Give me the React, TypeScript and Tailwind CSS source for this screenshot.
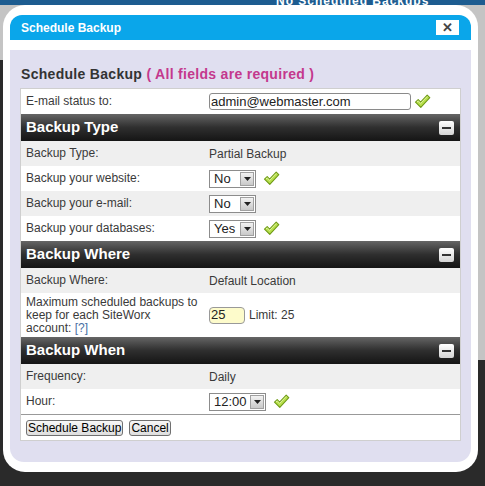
import React from "react";

const FONT = { fontFamily: '"Liberation Sans", Arial, sans-serif' };

function Check() {
  return (
    <svg width="17" height="15" viewBox="0 0 17 15" className="shrink-0">
      <path
        d="M1.5 8.2 L4.2 5.6 L6.6 8.2 L13.2 1.2 L15.8 3.6 L6.8 13.4 Z"
        fill="#b8e04c"
        stroke="#6f9a18"
        strokeWidth="1.1"
        strokeLinejoin="round"
      />
      <path d="M3 8 L4.2 6.8 L6.6 9.4 L13.3 2.4" fill="none" stroke="#e4f7a6" strokeWidth="0.9" />
    </svg>
  );
}

function Select({ value, width }: { value: string; width: string }) {
  return (
    <div className={`flex h-[18px] items-center border border-[#8c8c8c] bg-white ${width}`}>
      <span className="flex-1 pl-[4px] text-[13px] leading-none text-[#222]">{value}</span>
      <span className="mr-[1px] flex h-[14px] w-[14px] items-center justify-center border border-[#a0a0a0] bg-gradient-to-b from-[#f2f2f2] to-[#c9c9c9]">
        <svg width="7" height="4" viewBox="0 0 7 4">
          <path d="M0 0 H7 L3.5 4 Z" fill="#222" />
        </svg>
      </span>
    </div>
  );
}

function Header({ title }: { title: string }) {
  return (
    <div className="flex h-[27px] items-center justify-between bg-gradient-to-b from-[#666] via-[#2f2f2f] to-[#151515] pl-[5px] pr-[6px]">
      <span className="text-[15px] font-bold text-white">{title}</span>
      <span className="flex h-[14px] w-[15px] items-center justify-center rounded-[2px] bg-gradient-to-b from-white to-[#d4d4d4]">
        <span className="h-[2px] w-[9px] bg-[#333]" />
      </span>
    </div>
  );
}

function Row({
  label,
  children,
  gray,
  tall,
}: {
  label: React.ReactNode;
  children: React.ReactNode;
  gray?: boolean;
  tall?: boolean;
}) {
  return (
    <div
      className={`grid grid-cols-[185px_1fr] items-center ${tall ? "h-[44px]" : "h-[25px]"} ${
        gray ? "bg-[#efefef]" : "bg-white"
      }`}
    >
      <div className="pl-[5px] text-[12px] leading-[13px] text-[#3a3a3a]">{label}</div>
      <div className="flex items-center gap-[7px] pl-[3px] text-[12px] text-[#3a3a3a]">{children}</div>
    </div>
  );
}

export default function App() {
  return (
    <div
      className="relative h-[486px] w-[485px] overflow-hidden bg-[linear-gradient(to_bottom,#c4c4c4_0,#c4c4c4_360px,#2a2a2a_360px)]"
      style={FONT}
    >
      <div className="absolute left-0 top-0 h-[5px] w-full overflow-hidden bg-[#1d5c90]">
        <span className="absolute left-[276px] top-[-8px] text-[12px] font-bold tracking-[1px] text-white">
          No Scheduled Backups
        </span>
      </div>
      <div className="absolute left-0 top-[60px] h-[426px] w-[3px] bg-[#2a2a2a]" />

      <div className="absolute left-[3px] top-[5px] flex h-[467px] w-[475px] flex-col rounded-[22px] bg-white px-[7px] pb-[10px] pt-[10px]">
        <div className="flex h-[25px] items-center justify-between rounded-t-[12px] bg-[#0aa6ea] pl-[11px] pr-[12px]">
          <span className="text-[12px] font-bold text-white">Schedule Backup</span>
          <span className="flex h-[15px] w-[23px] items-center justify-center bg-white text-[13px] font-bold leading-none text-[#444]">
            ✕
          </span>
        </div>

        <div className="mt-[10px] flex-1 rounded-b-[14px] bg-[#e0dff0] px-[10px] pt-[15px]">
          <div className="mb-[5px] pl-[1px] text-[14px] font-bold leading-[18px] tracking-[0.3px] text-[#333]">
            Schedule Backup <span className="text-[#c4388d]">( All fields are required )</span>
          </div>

          <div className="border border-[#cfcfcf]">
            <Row label="E-mail status to:">
              <div className="flex h-[17px] w-[202px] items-center rounded-[3px] border border-[#8a8a8a] bg-white pl-[1px] text-[13px] text-[#222]">
                admin@webmaster.com
              </div>
              <span className="-ml-[4px]">
                <Check />
              </span>
            </Row>

            <Header title="Backup Type" />
            <Row label="Backup Type:" gray>
              Partial Backup
            </Row>
            <Row label="Backup your website:">
              <Select value="No" width="w-[47px]" />
              <Check />
            </Row>
            <Row label="Backup your e-mail:" gray>
              <Select value="No" width="w-[47px]" />
            </Row>
            <Row label="Backup your databases:">
              <Select value="Yes" width="w-[47px]" />
              <Check />
            </Row>

            <Header title="Backup Where" />
            <Row label="Backup Where:" gray>
              Default Location
            </Row>
            <Row
              tall
              label={
                <>
                  Maximum scheduled backups to
                  <br />
                  keep for each SiteWorx
                  <br />
                  account: <span className="text-[#4a6fa5]">[?]</span>
                </>
              }
            >
              <div className="flex h-[17px] w-[36px] items-center rounded-[4px] border border-[#999] bg-[#fdfbcb] pl-[1px] text-[13px] text-[#222]">
                25
              </div>
              <span className="-ml-[3px]">Limit: 25</span>
            </Row>

            <Header title="Backup When" />
            <Row label="Frequency:" gray>
              Daily
            </Row>
            <Row label="Hour:">
              <Select value="12:00" width="w-[57px]" />
              <Check />
            </Row>

            <div className="flex h-[26px] items-center gap-[6px] border-t border-[#999] bg-white pl-[5px]">
              <button className="h-[16px] rounded-[3px] border border-[#707070] bg-gradient-to-b from-[#f7f7f7] to-[#dedede] px-[1px] text-[12px] leading-none text-black">
                Schedule Backup
              </button>
              <button className="h-[16px] rounded-[3px] border border-[#707070] bg-gradient-to-b from-[#f7f7f7] to-[#dedede] px-[1px] text-[12px] leading-none text-black">
                Cancel
              </button>
            </div>
          </div>
        </div>
      </div>
    </div>
  );
}
